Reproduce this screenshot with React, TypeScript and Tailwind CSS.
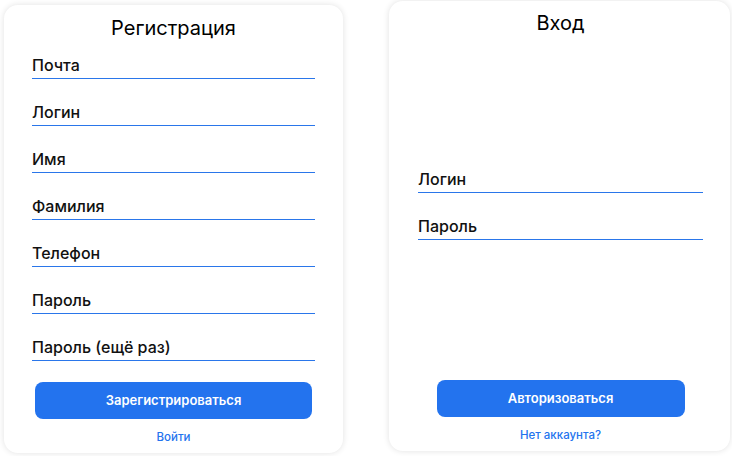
import React from 'react';

const font = { fontFamily: 'Inter, "Noto Sans", sans-serif' };

function Field({ label }: { label: string }) {
  return (
    <input
      type="text"
      placeholder={label}
      className="block w-full h-[27px] border-b border-[#2a76ea] bg-transparent text-[16px] font-medium text-black outline-none placeholder:text-[#111]"
    />
  );
}

function Register() {
  const fields = ['Почта', 'Логин', 'Имя', 'Фамилия', 'Телефон', 'Пароль', 'Пароль (ещё раз)'];
  return (
    <div className="mt-[5px] ml-[4px] flex h-[448px] w-[339px] flex-col rounded-[14px] bg-white px-[28px] shadow-[0_0_6px_rgba(0,0,0,0.12)]">
      <h1 className="mt-[9px] h-[28px] text-center text-[20px] leading-[28px] font-normal text-black">Регистрация</h1>
      <div className="mt-[10px] flex flex-col gap-[20px]">
        {fields.map((f) => (
          <Field key={f} label={f} />
        ))}
      </div>
      <button className="mx-[3px] mt-[21px] h-[37px] rounded-[8px] bg-[#2373ee] text-[13px] font-semibold text-white">
        Зарегистрироваться
      </button>
      <a className="mt-[10px] text-center text-[11.5px] leading-[16px] font-medium text-[#2373ee]">Войти</a>
    </div>
  );
}

function Login() {
  return (
    <div className="mt-[1px] mr-[2px] flex h-[450px] w-[341px] flex-col rounded-[14px] bg-white pl-[29px] pr-[27px] shadow-[0_0_6px_rgba(0,0,0,0.12)]">
      <h1 className="mt-[8px] h-[28px] text-center text-[20px] leading-[28px] font-normal text-black">Вход</h1>
      <div className="mt-[129px] flex flex-col gap-[20px]">
        <Field label="Логин" />
        <Field label="Пароль" />
      </div>
      <button className="mx-auto mt-[140px] h-[37px] w-[248px] rounded-[8px] bg-[#2373ee] text-[13px] font-semibold text-white">
        Авторизоваться
      </button>
      <a className="mt-[10px] text-center text-[11.5px] leading-[16px] font-medium text-[#2373ee]">Нет аккаунта?</a>
    </div>
  );
}

export default function App() {
  return (
    <div className="flex h-[456px] w-[732px] items-start justify-between bg-white" style={font}>
      <Register />
      <Login />
    </div>
  );
}
